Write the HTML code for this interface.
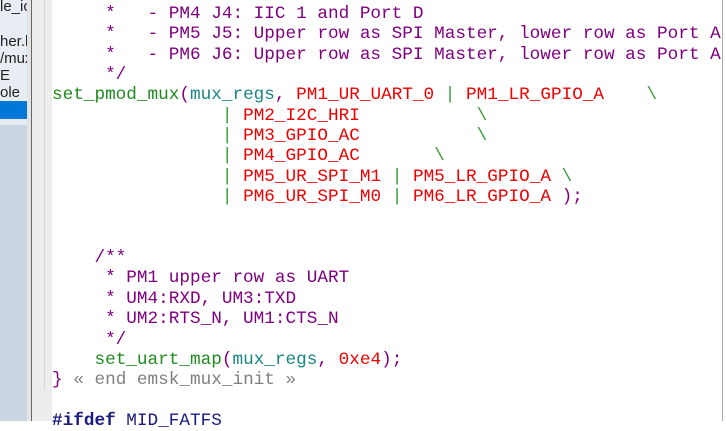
<!DOCTYPE html>
<html><head><style>
body{margin:0;width:726px;height:421px;overflow:hidden;background:#fff;position:relative;font-family:"Liberation Mono",monospace}
#lp{position:absolute;left:0;top:0;width:27px;height:421px;background:#c9d5e1}
#lp2{position:absolute;left:0;top:0;width:27px;height:125px;background:#e8edf3}
#sel{position:absolute;left:0;top:101px;width:27px;height:18px;background:#0078d7}
#lt{position:absolute;left:0;top:-2px;font:15px/17.3px "Liberation Sans",sans-serif;color:#222;white-space:pre;width:27px;overflow:hidden}
#sb{position:absolute;left:27px;top:0;width:4px;height:421px;background:#e4e4e4}
#ln{position:absolute;left:31px;top:0;width:1px;height:421px;background:#666}
#gut{position:absolute;left:32px;top:0;width:20px;height:421px;background:#ededed}
#gl{position:absolute;left:44px;top:0;width:1px;height:390px;background:#d8d8d8}
#rl{position:absolute;left:722px;top:0;width:1px;height:421px;background:#aaa}
pre{position:absolute;left:52px;top:4px;margin:0;font:17.7px/20.35px "Liberation Mono",monospace;color:#000}
.c{color:#800080}.f{color:#1f8a1f}.t{color:#1a8585}.r{color:#f00000}.p{color:#800080}.g{color:#808080}.o{color:#3a9a3a}.n{color:#1a1a80}
</style></head><body>
<div id="lp"></div><div id="lp2"></div><div id="sel"></div>
<div id="lt">le_io.

her.h'
/mux
E
ole</div>
<div id="sb"></div><div id="ln"></div><div id="gut"></div><div id="gl"></div>
<pre><span class="c">     *   - PM4 J4: IIC 1 and Port D
     *   - PM5 J5: Upper row as SPI Master, lower row as Port A
     *   - PM6 J6: Upper row as SPI Master, lower row as Port A
     */</span>
<span class="f">set_pmod_mux</span><span class="p">(</span><span class="t">mux_regs</span><span class="p">,</span> <span class="r">PM1_UR_UART_0</span> <span class="o">|</span> <span class="r">PM1_LR_GPIO_A</span>    <span class="o">\</span>
                <span class="o">|</span> <span class="r">PM2_I2C_HRI</span>           <span class="o">\</span>
                <span class="o">|</span> <span class="r">PM3_GPIO_AC</span>           <span class="o">\</span>
                <span class="o">|</span> <span class="r">PM4_GPIO_AC</span>       <span class="o">\</span>
                <span class="o">|</span> <span class="r">PM5_UR_SPI_M1</span> <span class="o">|</span> <span class="r">PM5_LR_GPIO_A</span> <span class="o">\</span>
                <span class="o">|</span> <span class="r">PM6_UR_SPI_M0</span> <span class="o">|</span> <span class="r">PM6_LR_GPIO_A</span> <span class="p">);</span>


<span class="c">    /**
     * PM1 upper row as UART
     * UM4:RXD, UM3:TXD
     * UM2:RTS_N, UM1:CTS_N
     */</span>
    <span class="f">set_uart_map</span><span class="p">(</span><span class="t">mux_regs</span><span class="p">,</span> <span class="r">0xe4</span><span class="p">);</span>
<span class="p">}</span> <span class="g">« end emsk_mux_init »</span>

<span class="n"><b>#ifdef</b> MID_FATFS</span></pre>
<div id="rl"></div>
</body></html>
